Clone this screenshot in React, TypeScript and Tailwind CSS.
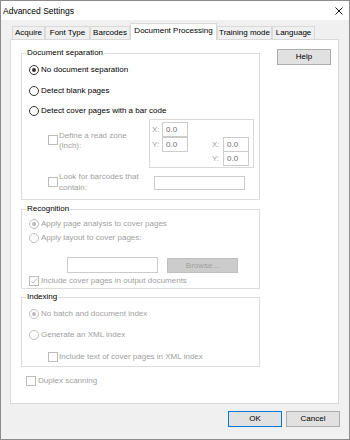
import type { ReactNode } from "react"

const tabs = [
  { label: "Acquire", w: "w-[33px]" },
  { label: "Font Type", w: "w-[45px]" },
  { label: "Barcodes", w: "w-[40px]" },
  { label: "Document Processing", w: "w-[87px]", active: true },
  { label: "Training mode", w: "w-[55px]" },
  { label: "Language", w: "w-[43px]" },
]

function Radio({ checked, disabled, children, className = "" }: { checked?: boolean; disabled?: boolean; children: ReactNode; className?: string }) {
  return (
    <div className={`flex items-center h-[14px] gap-[2px] ${disabled ? "text-[#a0a0a0]" : "text-black"} ${className}`}>
      <span
        className={`w-[10px] h-[10px] rounded-full border bg-white flex items-center justify-center ${
          disabled ? "border-[#bcbcbc]" : "border-[#333333]"
        }`}
      >
        {checked && <span className={`w-[4px] h-[4px] rounded-full ${disabled ? "bg-[#bcbcbc]" : "bg-[#333333]"}`} />}
      </span>
      <span className="leading-[10px]">{children}</span>
    </div>
  )
}

function Box({ checked, className = "" }: { checked?: boolean; className?: string }) {
  return (
    <span className={`w-[10px] h-[10px] shrink-0 border border-[#bcbcbc] bg-white flex items-center justify-center ${className}`}>
      {checked && (
        <svg width="8" height="8" viewBox="0 0 8 8">
          <path d="M1 4.2 L3 6.2 L7 1.5" fill="none" stroke="#bcbcbc" strokeWidth="1" />
        </svg>
      )}
    </span>
  )
}

function Group({ label, className = "", children }: { label: string; className?: string; children: ReactNode }) {
  return (
    <div className={`relative border border-[#dcdcdc] flex flex-col ${className}`}>
      <span className="absolute -top-[6px] left-[4px] bg-white px-[1px] leading-[10px] text-black">{label}</span>
      {children}
    </div>
  )
}

function Field({ label, value, lw }: { label: string; value: string; lw: string }) {
  return (
    <div className="flex items-center h-[15px]">
      <span className={`${lw} text-[#a0a0a0] leading-[10px]`}>{label}</span>
      <span className="w-[26px] h-[15px] border border-[#cccccc] bg-white pl-[3px] flex items-center text-[#6d6d6d] leading-[10px]">
        {value}
      </span>
    </div>
  )
}

export default function App() {
  return (
    <div className="w-[350px] h-[440px] border border-[#8c8c8c] bg-[#f0f0f0] flex flex-col font-['Liberation_Sans',Arial,sans-serif] text-[8px] text-black">
      {/* title bar */}
      <div className="h-[19px] bg-white flex items-center justify-between pl-[2px] pr-[6px]">
        <span className="text-[8.5px] leading-[10px]">Advanced Settings</span>
        <svg width="8" height="8" viewBox="0 0 8 8">
          <path d="M0.5 0.5 L7.5 7.5 M7.5 0.5 L0.5 7.5" stroke="#000" strokeWidth="0.9" />
        </svg>
      </div>

      {/* tabs */}
      <div className="ml-[9px] mr-[10px] mt-[3px] flex flex-col">
        <div className="h-[16px] flex items-end pl-[2px]">
          {tabs.map((t) =>
            t.active ? (
              <div
                key={t.label}
                className={`${t.w} h-[17px] -mb-[1px] relative z-10 bg-white border border-b-0 border-[#d9d9d9] flex items-center justify-center leading-[10px] pb-[2px]`}
              >
                {t.label}
              </div>
            ) : (
              <div
                key={t.label}
                className={`${t.w} h-[13px] border border-b-0 border-[#d9d9d9] bg-[#f0f0f0] flex items-center justify-center leading-[10px]`}
              >
                {t.label}
              </div>
            ),
          )}
        </div>

        {/* panel */}
        <div className="h-[365px] bg-white border border-[#d9d9d9] flex">
          <div className="ml-[10px] mt-[13px] w-[239px] flex flex-col">
            <Group label="Document separation" className="h-[147px]">
              <div className="pl-[7px] flex flex-col">
                <Radio checked className="mt-[9px]">No document separation</Radio>
                <Radio className="mt-[7px]">Detect blank pages</Radio>
                <Radio className="mt-[6px]">Detect cover pages with a bar code</Radio>
              </div>

              <div className="mt-[1px] pl-[26px] flex">
                <div className="w-[101px] flex items-start gap-[1px] pt-[12px] text-[#a0a0a0]">
                  <Box className="mt-[4px]" />
                  <span className="leading-[10px]">
                    Define a read zone
                    <br />
                    (inch):
                  </span>
                </div>
                <div className="w-[105px] h-[49px] border border-[#d9d9d9] flex">
                  <div className="pl-[2px] pt-[2px] flex flex-col">
                    <Field label="X:" value="0.0" lw="w-[10px]" />
                    <Field label="Y:" value="0.0" lw="w-[10px]" />
                  </div>
                  <div className="ml-[24px] pt-[17px] flex flex-col">
                    <Field label="X:" value="0.0" lw="w-[11px]" />
                    <div className="-mt-[1px]">
                      <Field label="Y:" value="0.0" lw="w-[11px]" />
                    </div>
                  </div>
                </div>
              </div>

              <div className="mt-[3px] pl-[26px] flex h-[22px]">
                <div className="w-[106px] flex items-start gap-[1px] text-[#a0a0a0]">
                  <Box className="mt-[6px]" />
                  <span className="leading-[11px]">
                    Look for barcodes that
                    <br />
                    contain:
                  </span>
                </div>
                <span className="mt-[5px] w-[91px] h-[14px] border border-[#cccccc] bg-white" />
              </div>
            </Group>

            <Group label="Recognition" className="mt-[9px] h-[80px]">
              <div className="pl-[7px] flex flex-col">
                <Radio checked disabled className="mt-[7px]">Apply page analysis to cover pages</Radio>
                <Radio disabled>Apply layout to cover pages:</Radio>
              </div>
              <div className="mt-[12px] ml-[45px] flex gap-[9px]">
                <span className="w-[91px] h-[16px] border border-[#cccccc] bg-white" />
                <span className="w-[71px] h-[15px] mt-[1px] border border-[#bfbfbf] bg-[#cccccc] text-[#a0a0a0] flex items-center justify-center leading-[10px]">
                  Browse...
                </span>
              </div>
              <div className="mt-[2px] pl-[7px] h-[12px] flex items-center gap-[2px] text-[#a0a0a0]">
                <Box checked />
                <span className="leading-[10px]">Include cover pages in output documents</span>
              </div>
            </Group>

            <Group label="Indexing" className="mt-[8px] h-[70px]">
              <div className="pl-[7px] flex flex-col">
                <Radio checked disabled className="mt-[9px]">No batch and document index</Radio>
                <Radio disabled className="mt-[7px]">Generate an XML index</Radio>
              </div>
              <div className="mt-[8px] pl-[26px] h-[14px] flex items-center gap-[1px] text-[#a0a0a0]">
                <Box />
                <span className="leading-[10px]">Include text of cover pages in XML index</span>
              </div>
            </Group>

            <div className="mt-[7px] ml-[5px] h-[14px] flex items-center gap-[2px] text-[#a0a0a0]">
              <Box />
              <span className="leading-[10px]">Duplex scanning</span>
            </div>
          </div>

          <div className="ml-[17px] mt-[9px]">
            <button className="w-[54px] h-[16px] bg-[#e1e1e1] border border-[#adadad] flex items-center justify-center leading-[10px]">
              Help
            </button>
          </div>
        </div>
      </div>

      {/* footer */}
      <div className="mt-[7px] pr-[9px] flex justify-end gap-[4px]">
        <button className="w-[54px] h-[16px] bg-[#e1e1e1] border border-[#0078d7] flex items-center justify-center leading-[10px]">
          OK
        </button>
        <button className="w-[54px] h-[16px] bg-[#e1e1e1] border border-[#adadad] flex items-center justify-center leading-[10px]">
          Cancel
        </button>
      </div>
    </div>
  )
}
